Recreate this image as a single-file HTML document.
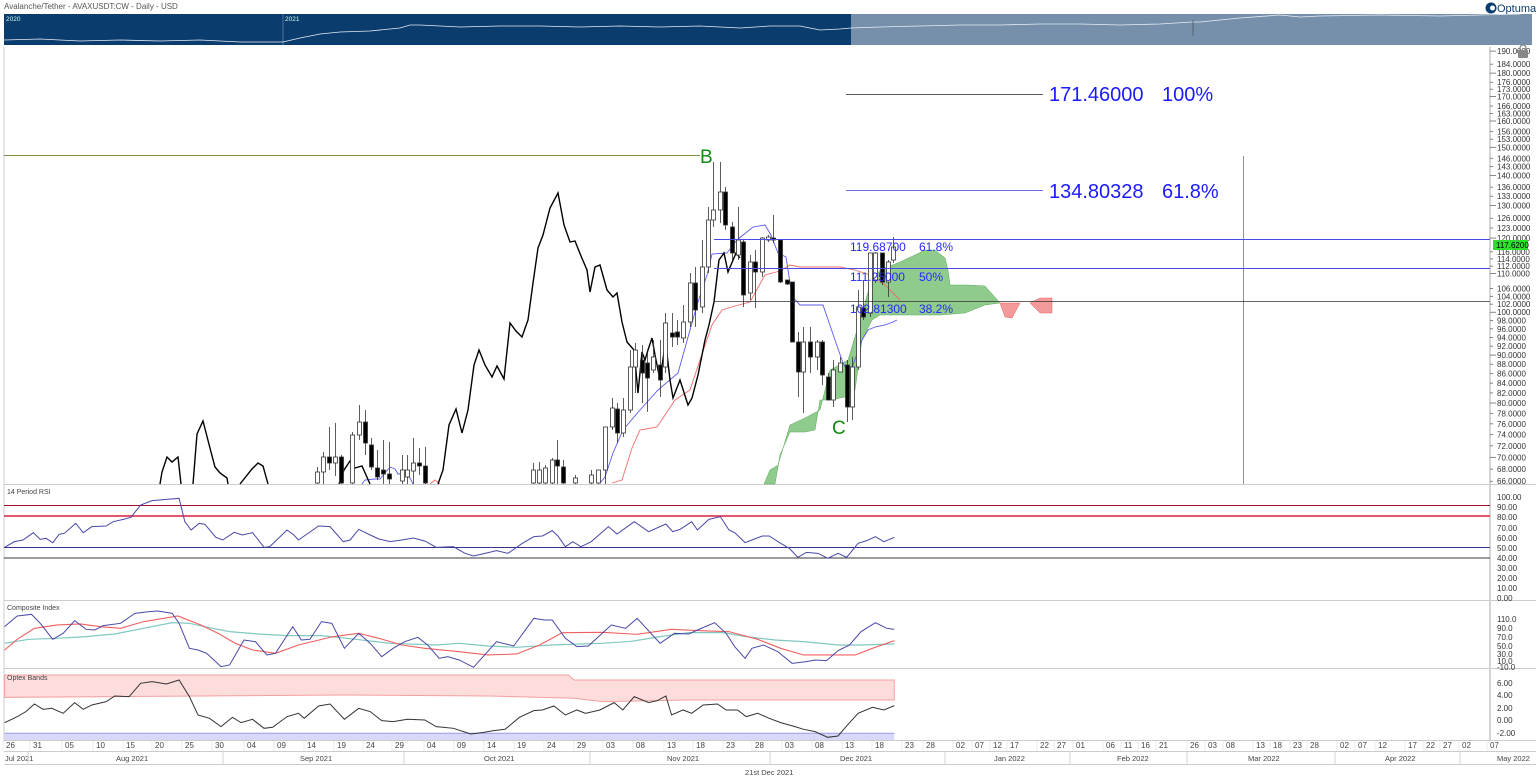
<!DOCTYPE html>
<html><head><meta charset="utf-8"><style>
body{margin:0;width:1536px;height:783px;background:#fff;overflow:hidden;font-family:"Liberation Sans",sans-serif}
svg{position:absolute;left:0;top:0}
text{font-family:"Liberation Sans",sans-serif}
.ax{font-size:8px;fill:#333}
.dl{font-size:8px;fill:#444}
</style></head><body>
<svg width="1536" height="783" viewBox="0 0 1536 783">
<!-- title -->
<text x="4" y="9" font-size="8" fill="#555">Avalanche/Tether - AVAXUSDT:CW - Daily - USD</text>
<!-- logo -->
<circle cx="1491" cy="8" r="5.5" fill="#0a3d70"/><circle cx="1492.5" cy="8" r="2.5" fill="#fff"/>
<text x="1497" y="12" font-size="11" fill="#0a3d70">Optuma</text>
<!-- navigator -->
<rect x="4" y="14" width="847" height="31" fill="#0b3c6e"/>
<rect x="851" y="14" width="669" height="31" fill="#7690ab"/>
<rect x="1520" y="14" width="12" height="31" fill="#7690ab"/>
<line x1="283" y1="14" x2="283" y2="45" stroke="#7f9cc0" stroke-width="0.6"/>
<text x="6" y="21" font-size="6.5" fill="#cfe">2020</text><text x="285" y="21" font-size="6.5" fill="#cfe">2021</text>
<polyline fill="none" stroke="#e6edf5" stroke-width="0.8" points="4,40 40,39 80,41 120,40 160,41 200,40 240,42 283,42 300,38 320,34 340,32 370,31 400,28 410,25 420,25 440,26 460,27 500,26 540,26 580,27 620,26 660,27 700,26 740,28 770,26 800,26 820,30 840,29 851,28 880,27 920,26 960,25 1000,25 1040,24 1080,24 1120,25 1160,24 1192,22 1200,22 1240,18 1280,15 1300,17 1320,16 1380,15 1440,16 1480,15 1520,14"/>
<line x1="1193" y1="20" x2="1193" y2="36" stroke="#444" stroke-width="0.6"/>
<!-- panel frame -->
<line x1="4" y1="47" x2="4" y2="741" stroke="#ccc"/>
<line x1="1490" y1="47" x2="1490" y2="741" stroke="#888" stroke-width="0.7"/>
<line x1="4" y1="484.5" x2="1536" y2="484.5" stroke="#ccc"/>
<line x1="4" y1="600.5" x2="1536" y2="600.5" stroke="#ccc"/>
<line x1="4" y1="668.5" x2="1536" y2="668.5" stroke="#ccc"/>
<line x1="4" y1="740.5" x2="1536" y2="740.5" stroke="#ccc"/>
<line x1="4" y1="751.5" x2="1536" y2="751.5" stroke="#ccc"/>
<line x1="4" y1="764.5" x2="1536" y2="764.5" stroke="#ccc"/>

<!-- main chart -->
<line x1="4" y1="155.5" x2="700" y2="155.5" stroke="#8a8a50" stroke-width="0.9"/>
<line x1="1243.5" y1="156" x2="1243.5" y2="484" stroke="#777" stroke-width="0.8"/>
<!-- cloud -->
<polygon fill="#8fcb8c" stroke="#5aa85a" stroke-width="0.5" points="764,484 770,470 778,465 790,425 805,418 820,410 830,370 848,360 860,320 870,285 880,270 900,262 915,255 925,250 935,250 945,258 948,270 950,285 968,285 985,286 993,295 1000,303 985,305 965,313 940,315 903,315 880,315 872,320 862,340 855,390 845,397 830,400 820,400 815,430 805,432 790,432 780,455 775,484"/>
<polygon fill="#f59a9a" stroke="#e06060" stroke-width="0.5" points="1000,303 1020,303 1012,318 1005,317"/>
<polygon fill="#f59a9a" stroke="#e06060" stroke-width="0.5" points="1030,303 1040,298 1052,298 1052,313 1040,313"/>
<!-- red line -->
<polyline fill="none" stroke="#f06b6b" stroke-width="0.9" points="612,483 622,480 632,448 640,430 657,427 675,400 690,390 700,360 712,325 722,310 735,306 750,302 765,275 780,271 790,265 800,267 840,267 855,270 870,275 885,285 900,300"/>
<polyline fill="none" stroke="#f06b6b" stroke-width="0.9" points="430,484 435,480 440,484"/>
<!-- blue line -->
<polyline fill="none" stroke="#5a5af0" stroke-width="0.9" points="600,483 605,477 613,453 623,430 640,410 658,390 678,373 690,330 697,305 707,275 712,254 727,253 737,240 753,227 765,225 771,235 778,253 786,257 792,296 800,305 823,305 835,340 843,363 848,372 853,365 862,340 868,330 875,327 885,325 893,322 897,320"/>
<polyline fill="none" stroke="#5a5af0" stroke-width="0.9" points="362,484 365,480 375,479 380,479 385,473 390,467 395,469 398,474 405,474 410,478 413,484"/>
<!-- chikou black -->
<g fill="none" stroke="#000" stroke-width="1.4">
<polyline points="160,484 162,472 167,457 172,462 178,457 181,484"/>
<polyline points="193,484 197,434 203,421 211,452 215,467 220,473 227,478 228,484"/>
<polyline points="240,484 252,469 258,463 263,466 268,484"/>
<polyline points="339,484 344,470 350,461 355,468 362,466 370,484"/>
<polyline points="438,484 443,470 449,425 456,409 462,433 468,410 474,365 479,350 485,365 492,377 497,366 504,379 510,323 516,331 522,337 528,320 533,283 538,248 543,235 550,208 558,193 564,225 570,242 575,241 581,256 587,270 590,292 595,267 600,265 607,290 613,297 617,293 622,322 627,342 634,350 638,393 642,352 645,360 648,350 652,338 655,355 660,380 664,352 666,345 670,380 673,398 680,380 688,405 692,398 698,375 705,340 709,325 714,302 719,260 724,253 728,272 736,253 740,258"/>
</g>
<!-- candles -->
<g id="cdl" stroke="#333" stroke-width="0.8"></g>
<!-- fib lines -->
<line x1="846" y1="94.5" x2="1043" y2="94.5" stroke="#222" stroke-width="0.8"/>
<line x1="846" y1="190.5" x2="1043" y2="190.5" stroke="#3a3ae0" stroke-width="0.8"/>
<text x="1049" y="101" font-size="20" fill="#1a1aff">171.46000</text><text x="1162" y="101" font-size="20" fill="#1a1aff">100%</text>
<text x="1049" y="198" font-size="20" fill="#1a1aff">134.80328</text><text x="1162" y="198" font-size="20" fill="#1a1aff">61.8%</text>
<line x1="714" y1="239.5" x2="1490" y2="239.5" stroke="#4a4ae8" stroke-width="0.9"/>
<line x1="714" y1="268.5" x2="1490" y2="268.5" stroke="#4a4ae8" stroke-width="0.9"/>
<line x1="714" y1="301.5" x2="1490" y2="301.5" stroke="#333" stroke-width="0.8"/>
<g font-size="12" fill="#2828ff">
<text x="850" y="251">119.68700</text><text x="919" y="251">61.8%</text>
<text x="850" y="281">111.25000</text><text x="919" y="281">50%</text>
<text x="850" y="313">102.81300</text><text x="919" y="313">38.2%</text>
</g>
<text x="700" y="163" font-size="19" fill="#118a11">B</text>
<text x="832" y="434" font-size="19" fill="#118a11">C</text>
<!-- axis -->
<g id="ax"></g>
<rect x="1493" y="240" width="35" height="10" fill="#2be22b"/>
<text x="1496" y="248" font-size="8" fill="#000">117.6200</text>
<rect x="1518" y="50" width="10" height="8" rx="1" fill="#888"/><path d="M1520 50 v-2 a3 3 0 0 1 6 0 v2" fill="none" stroke="#888" stroke-width="1.3"/>

<!-- RSI -->
<text x="7" y="494" font-size="7" fill="#444">14 Period RSI</text>
<line x1="4" y1="505.5" x2="1490" y2="505.5" stroke="#a0102a" stroke-width="1.1"/>
<line x1="4" y1="516" x2="1490" y2="516" stroke="#dd1f40" stroke-width="1.6"/>
<line x1="4" y1="547.5" x2="1490" y2="547.5" stroke="#34348a" stroke-width="1"/>
<line x1="4" y1="558" x2="1490" y2="558" stroke="#3a3a3a" stroke-width="0.9"/>
<g transform="translate(0,480) scale(0.574,0.3333)">
<polyline fill="none" stroke="#4848a8" stroke-width="1" vector-effect="non-scaling-stroke" points="8,202 25,185 40,180 58,158 70,178 80,175 92,188 103,163 112,160 132,130 145,158 160,140 185,138 197,125 215,118 228,112 245,75 265,62 290,58 312,55 322,125 333,150 347,130 357,133 376,172 388,180 408,157 422,165 440,158 460,202 470,200 500,150 512,165 520,180 555,138 575,140 598,185 610,180 625,148 645,165 660,177 680,185 700,180 720,174 740,183 760,202 790,200 810,220 825,228 845,220 865,212 885,220 910,190 930,170 945,168 962,152 972,168 985,200 998,185 1012,200 1030,185 1060,140 1075,162 1105,125 1130,155 1160,132 1172,155 1185,148 1205,125 1215,150 1235,118 1255,110 1270,150 1280,158 1298,188 1310,180 1328,168 1340,168 1360,190 1375,205 1390,232 1405,217 1425,220 1442,235 1460,220 1475,232 1495,190 1510,182 1525,170 1540,185 1558,172"/>
<!-- composite -->
<polyline fill="none" stroke="#7fc8c0" stroke-width="1.2" vector-effect="non-scaling-stroke" points="8,490 50,478 100,475 150,470 200,462 250,445 300,428 330,430 370,445 400,455 450,462 500,467 560,467 620,478 680,490 760,495 800,490 850,498 900,502 960,495 1050,490 1100,484 1150,470 1200,458 1260,458 1300,470 1350,480 1400,485 1460,495 1500,495 1558,492"/>
<polyline fill="none" stroke="#f06060" stroke-width="1.1" vector-effect="non-scaling-stroke" points="8,510 30,478 60,445 100,435 140,432 175,440 210,445 250,425 310,408 350,435 380,460 410,490 440,510 480,520 520,495 580,470 625,460 660,475 700,495 740,505 800,515 850,525 900,522 940,495 980,458 1050,457 1110,463 1170,448 1220,452 1270,455 1320,478 1360,505 1400,525 1440,525 1490,525 1520,505 1558,482"/>
<polyline fill="none" stroke="#4848a8" stroke-width="1" vector-effect="non-scaling-stroke" points="8,440 30,408 55,403 70,430 92,478 110,460 130,422 150,448 165,450 180,437 210,430 235,400 260,395 275,393 300,400 312,430 330,505 345,510 360,520 385,560 400,555 425,480 445,485 465,525 480,520 510,440 525,480 540,478 560,425 578,430 600,505 625,460 645,490 665,530 685,505 705,485 728,472 745,495 765,535 780,530 800,540 825,562 865,485 895,498 930,415 948,420 962,420 985,475 1005,500 1025,498 1065,435 1090,445 1110,415 1150,490 1175,460 1200,462 1215,450 1245,428 1265,460 1280,500 1298,535 1310,505 1330,495 1355,515 1380,550 1405,545 1420,540 1440,542 1460,512 1480,495 1500,455 1525,428 1545,445 1558,448"/>
<!-- optex -->
<polygon fill="#fddcdc" stroke="#f4a0a0" stroke-width="1" vector-effect="non-scaling-stroke" points="8,585 990,585 1000,600 1558,600 1558,660 1450,660 1200,660 1050,665 1000,655 850,648 600,645 200,650 8,652"/>
<rect x="8" y="760" width="1550" height="20" fill="#d8d8fa"/>
<polyline fill="none" stroke="#9a9af0" stroke-width="1" vector-effect="non-scaling-stroke" points="8,760 1558,760"/>
<polyline fill="none" stroke="#333" stroke-width="1" vector-effect="non-scaling-stroke" points="8,728 30,710 45,695 60,672 75,688 90,685 110,700 130,668 145,688 160,675 185,665 200,648 225,650 245,610 265,605 290,612 312,600 330,650 345,705 365,715 385,740 405,712 420,728 440,718 460,745 475,742 500,710 520,700 530,715 555,678 575,672 600,718 625,685 645,695 665,722 685,725 710,718 740,720 760,740 790,745 820,762 840,758 860,752 880,748 905,712 930,692 945,690 965,678 985,705 1005,690 1020,700 1045,690 1070,668 1085,690 1105,650 1130,668 1145,662 1160,648 1170,705 1190,690 1205,700 1225,675 1250,672 1265,690 1285,690 1300,710 1320,700 1340,715 1360,728 1385,740 1400,748 1420,755 1442,772 1460,768 1475,738 1495,700 1520,682 1540,690 1558,677"/>
</g>
<text x="7" y="610" font-size="7" fill="#444">Composite Index</text>
<text x="7" y="680" font-size="7" fill="#444">Optex Bands</text>
<g class="ax">
<text x="1497" y="500">100.00</text><text x="1497" y="510">90.00</text><text x="1497" y="520">80.00</text><text x="1497" y="531">70.00</text><text x="1497" y="541">60.00</text><text x="1497" y="551">50.00</text><text x="1497" y="561">40.00</text><text x="1497" y="571">30.00</text><text x="1497" y="581">20.00</text><text x="1497" y="591">10.00</text><text x="1497" y="601">0.00</text>
<text x="1497" y="622">110.0</text><text x="1497" y="631">90.0</text><text x="1497" y="640">70.0</text><text x="1497" y="649">50.0</text><text x="1497" y="657">30.0</text><text x="1497" y="664">10.0</text><text x="1497" y="670">-10.0</text>
<text x="1497" y="686">6.00</text><text x="1497" y="698">4.00</text><text x="1497" y="711">2.00</text><text x="1497" y="723">0.00</text><text x="1497" y="736">-2.00</text>
</g>
<!-- dates -->
<g class="dl" id="dates"></g>
<g font-size="7.5" fill="#444">
<text x="5" y="761">Jul 2021</text><text x="116" y="761">Aug 2021</text><text x="300" y="761">Sep 2021</text><text x="484" y="761">Oct 2021</text><text x="667" y="761">Nov 2021</text><text x="840" y="761">Dec 2021</text><text x="994" y="761">Jan 2022</text><text x="1117" y="761">Feb 2022</text><text x="1248" y="761">Mar 2022</text><text x="1385" y="761">Apr 2022</text><text x="1497" y="761">May 2022</text>
<text x="745" y="775">21st Dec 2021</text>
</g>
<g stroke="#ccc" stroke-width="0.8">
<line x1="28" y1="752" x2="28" y2="764"/><line x1="223" y1="752" x2="223" y2="764"/><line x1="404" y1="752" x2="404" y2="764"/><line x1="590" y1="752" x2="590" y2="764"/><line x1="770" y1="752" x2="770" y2="764"/><line x1="945" y1="752" x2="945" y2="764"/><line x1="1070" y1="752" x2="1070" y2="764"/><line x1="1187" y1="752" x2="1187" y2="764"/><line x1="1335" y1="752" x2="1335" y2="764"/><line x1="1460" y1="752" x2="1460" y2="764"/>
</g>
</svg>
<script>
var NS="http://www.w3.org/2000/svg";
function el(p,t,a,txt){var e=document.createElementNS(NS,t);for(var k in a)e.setAttribute(k,a[k]);if(txt)e.textContent=txt;p.appendChild(e);return e;}
var C=[[598,470,484,470,483,0],[605,427,484,427,470,0],[612,398,430,408,427,0],[617,403,443,409,433,1],[623,398,437,410,433,0],[630,350,413,367,410,0],[635,343,393,350,367,0],[642,345,403,360,373,1],[647,353,412,363,378,1],[653,340,373,357,370,0],[660,340,397,365,380,1],[665,313,373,323,367,0],[672,313,347,333,337,1],[677,320,345,332,337,1],[683,305,343,322,338,0],[690,273,327,283,322,0],[695,267,327,283,310,1],[702,240,313,267,307,0],[708,207,273,220,267,0],[713,162,227,210,220,0],[720,162,223,192,210,0],[725,187,230,192,225,1],[732,222,260,227,253,1],[738,207,260,240,255,0],[743,240,307,242,295,1],[750,255,300,262,293,0],[755,250,308,262,272,1],[762,237,277,238,272,0],[768,235,242,237,240,0],[773,215,243,238,240,1],[780,240,283,240,282,1],[787,280,285,280,284,1],[792,282,342,282,342,1],[798,332,397,342,372,1],[803,327,413,342,372,0],[810,327,373,342,357,1],[817,340,370,342,357,0],[822,340,385,342,375,1],[828,373,400,377,400,1],[833,360,407,370,400,0],[840,357,370,363,372,0],[847,360,422,365,407,1],[852,357,420,367,407,0],[858,290,370,307,367,0],[863,280,320,308,317,1],[870,253,317,253,313,0],[875,252,283,253,280,0],[882,253,285,253,282,1],[888,260,297,262,282,0],[893,237,263,247,260,0],
[317,467,484,472,483,0],[323,452,484,457,472,0],[329,427,470,457,463,1],[335,423,476,457,463,0],[341,455,484,457,483,1],[352,432,484,435,483,0],[359,405,440,422,435,0],[365,410,455,422,443,1],[371,438,470,445,467,1],[377,450,480,468,477,1],[383,440,484,470,474,1],[389,442,484,474,479,1],[402,455,484,470,481,0],[407,455,484,470,477,0],[413,438,484,463,471,0],[419,448,475,463,466,1],[425,447,484,466,483,1],[533,463,484,470,483,0],[539,462,484,470,483,0],[545,465,484,468,483,0],[552,458,484,460,483,0],[557,440,484,460,466,1],[563,460,484,467,483,1],[575,475,484,478,483,0],[591,470,484,475,483,0]];
var g=document.getElementById("cdl");
C.forEach(function(c){el(g,"line",{x1:c[0]+.5,x2:c[0]+.5,y1:c[1],y2:c[2]});el(g,"rect",{x:c[0]-1.5,y:c[3],width:4,height:Math.max(1,c[4]-c[3]),fill:c[5]?"#000":"#fff"});});
var ax=document.getElementById("ax");
[190,184,180,176,173,170,166,163,160,156,153,150,146,143,140,136,133,130,126,123,120,116,114,112,110,106,104,102,100,98,96,94,92,90,88,86,84,82,80,78,76,74,72,70,68,66].forEach(function(p){var y=2185.6-406.8*Math.log(p);var m=p%10==0;el(ax,"line",{x1:1490,x2:m?1496:1493,y1:y,y2:y,stroke:"#555","stroke-width":0.7});el(ax,"text",{x:1497,y:y+3,"class":"ax"},p.toFixed(4));});
var D=[["26",6],["31",33],["05",65],["10",96],["15",126],["20",155],["25",185],["30",215],["04",247],["09",277],["14",307],["19",337],["24",366],["29",395],["04",427],["09",457],["14",487],["19",517],["24",547],["29",577],["03",606],["08",636],["13",667],["18",696],["23",726],["28",755],["03",785],["08",815],["13",845],["18",875],["23",905],["28",926],["02",956],["07",975],["12",993],["17",1010],["22",1040],["27",1057],["01",1076],["06",1106],["11",1124],["16",1141],["21",1159],["26",1190],["03",1208],["08",1226],["13",1256],["18",1273],["23",1293],["28",1310],["02",1340],["07",1358],["12",1378],["17",1408],["22",1426],["27",1443],["02",1462],["07",1490]];
var dg=document.getElementById("dates");
D.forEach(function(d){el(dg,"text",{x:d[1],y:748},d[0]);el(dg,"line",{x1:d[1]-3,x2:d[1]-3,y1:741,y2:751,stroke:"#ddd","stroke-width":0.6});});
</script>
</body></html>
